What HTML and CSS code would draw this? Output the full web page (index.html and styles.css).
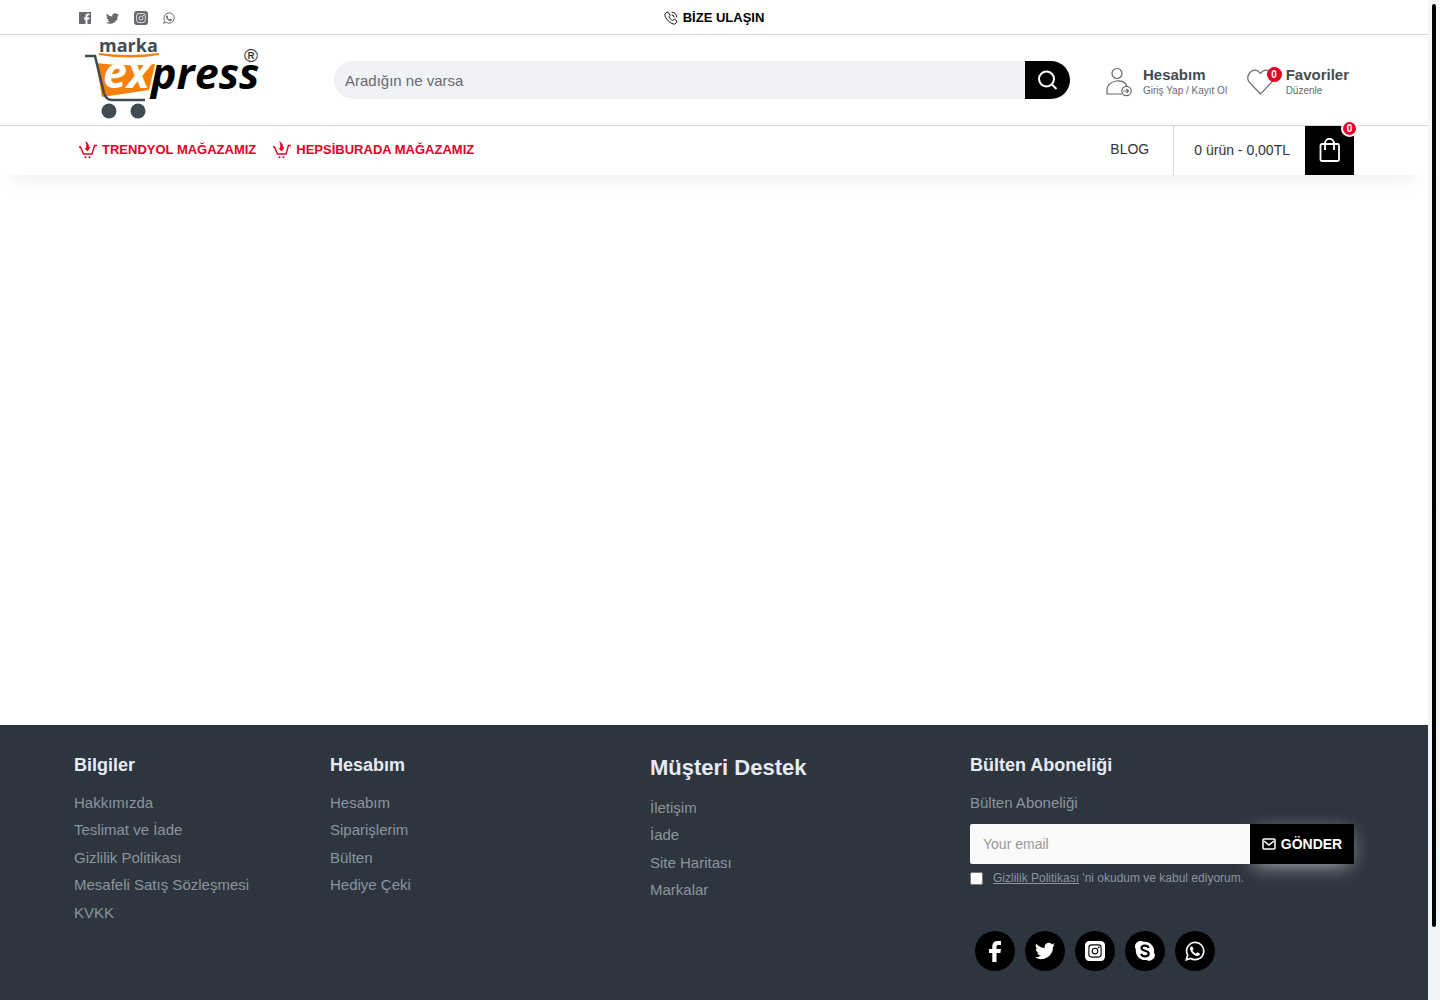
FILE: index.html
```html
<!DOCTYPE html>
<html lang="tr">
<head>
<meta charset="utf-8">
<meta name="viewport" content="width=device-width, initial-scale=1">
<title>Marka Express</title>
<link rel="stylesheet" href="styles.css">
</head>
<body>
<svg class="sprite" aria-hidden="true">
  <symbol id="twitter" viewBox="0 0 24 24"><path d="M23.9 4.6a10 10 0 0 1-2.8.8 5 5 0 0 0 2.1-2.7 10 10 0 0 1-3.1 1.2 4.9 4.9 0 0 0-8.4 4.5A14 14 0 0 1 1.7 3.2a4.9 4.9 0 0 0 1.5 6.5 4.9 4.9 0 0 1-2.2-.6 4.9 4.9 0 0 0 3.9 4.900 5 5 0 0 1-2.200.1 4.900 4.900 0 0 0 4.600 3.400A9.900 9.900 0 0 1 0 19.500 14 14 0 0 0 21.500 7.100a10 10 0 0 0 2.400-2.500z"/></symbol>
  <symbol id="instagram" viewBox="0 0 24 24"><path fill-rule="evenodd" d="M5 0h14a5 5 0 0 1 5 5v14a5 5 0 0 1-5 5H5a5 5 0 0 1-5-5V5a5 5 0 0 1 5-5zm3 4a4 4 0 0 0-4 4v8a4 4 0 0 0 4 4h8a4 4 0 0 0 4-4V8a4 4 0 0 0-4-4zm0 1.300h8A2.700 2.700 0 0 1 18.700 8v8a2.700 2.700 0 0 1-2.700 2.700H8A2.700 2.700 0 0 1 5.300 16V8A2.700 2.700 0 0 1 8 5.300z"/><circle cx="12" cy="12" r="3.400" fill="none" stroke="var(--hole)" stroke-width="1.300"/><circle cx="16.400" cy="7.700" r="1" fill="var(--hole)"/></symbol>
  <symbol id="whatsapp" viewBox="0 0 24 24"><path fill="none" stroke="currentColor" stroke-width="2" d="M1.500 22.500 3.200 17A10.300 10.300 0 1 1 7 20.900z"/><path d="M8 6.300c-.5 0-2 1-2 3 0 3.500 5 8.700 8.800 8.700 1.800 0 3.200-1.400 3.200-2.700 0-.5-2.700-1.900-3.200-1.900s-1.200 1.600-1.700 1.600c-.9 0-4-2.700-4-3.600 0-.5 1.200-1.200 1.200-1.700S9 6.300 8 6.300z"/></symbol>
  <symbol id="cart" viewBox="0 0 18 18"><path fill="none" stroke="currentColor" stroke-width="1.400" d="M0 6h1.500L4.500 13h8.500l2.500-8.500H18"/><path d="M6 0c3 1.500 4 3.500 4 6h1.500L8.500 10.500 5.500 7l1.500.2C7.500 5 7.500 2.500 6 0z"/><circle cx="6.500" cy="16.300" r="1"/><circle cx="10.500" cy="16.300" r="1"/></symbol>
</svg>
<div class="shell">
  <div class="page">
    <header class="header">
      <div class="topbar">
        <div class="container topbar-row">
          <nav class="top-social" aria-label="Sosyal medya">
            <a href="#" aria-label="Facebook"><svg width="12" height="12" viewBox="0 0 12 12"><path d="M0 0h12v12H8.500V7.500h1.700l.3-2h-2V4.300c0-.6.3-1 1-1h1V1.600H9c-1.600 0-2.500 1-2.500 2.500v1.400H5v2h1.500V12H0z"/></svg></a>
            <a href="#" aria-label="Twitter"><svg width="13" height="13"><use href="#twitter"/></svg></a>
            <a href="#" aria-label="Instagram"><svg width="14" height="14"><use href="#instagram"/></svg></a>
            <a href="#" aria-label="WhatsApp"><svg width="12" height="12"><use href="#whatsapp"/></svg></a>
          </nav>
          <a class="contact" href="#"><svg width="14" height="14" viewBox="0 0 24 24" fill="none" stroke="currentColor" stroke-width="1.600"><path d="M5 2 1.500 5.500C1 12 11 23 18.500 22.500L22 19v-2l-4.500-3-3 2.500c-2-1-5-4-6-6.500l2-2.500L7 2zM13 6.500a5 5 0 0 1 4.500 4.500M13 2a10 10 0 0 1 9 9"/></svg>BİZE ULAŞIN</a>
        </div>
      </div>
      <div class="middle">
        <div class="container middle-row">
          <a class="logo" href="#" aria-label="Marka Express">
            <svg width="190" height="90" viewBox="0 0 190 90">
              <path d="M22 28q30 4 59 1l-6 26-47 7z" fill="#f57f0b"/>
              <path d="M25 18q30 4 60 0v2q-30 5-60 0z" fill="#f57f0b"/>
              <path d="M11 21h10l9 37q2 7 8 7h33" fill="none" stroke="#414c52" stroke-width="2.500"/>
              <circle cx="35" cy="76" r="7.500" fill="#414c52"/><circle cx="64" cy="76" r="7.500" fill="#414c52"/>
              <text x="25" y="17" class="logo-small">marka</text>
              <text x="29" y="53" class="logo-ex">ex</text>
              <text x="77" y="54" class="logo-press">press</text>
              <text x="170" y="27" class="logo-reg">®</text>
            </svg>
          </a>
          <form class="search" role="search">
            <input type="search" aria-label="Arama" placeholder="Aradığın ne varsa">
            <button type="button" aria-label="Ara"><svg width="21" height="21" viewBox="0 0 21 21" fill="none" stroke="currentColor" stroke-width="2"><circle cx="9.500" cy="9" r="7.500"/><path d="m15 14.500 4.500 4.500"/></svg></button>
          </form>
          <div class="user-links">
            <a class="user-link account" href="#">
              <svg width="27" height="30" viewBox="0 0 27 30" fill="none" stroke="currentColor" stroke-width="1.200"><circle cx="11" cy="6.500" r="5"/><path d="M16 27H1v-4c0-11 19-12 20-3"/><circle cx="20.500" cy="24" r="4.700"/><path d="M17.500 24h5m-2-2 2 2-2 2"/></svg>
              <span><b>Hesabım</b><small>Giriş Yap / Kayıt Ol</small></span>
            </a>
            <a class="user-link" href="#">
              <span class="heart"><svg width="28" height="27" viewBox="0 0 28 27" fill="none" stroke="currentColor" stroke-width="1.200"><path d="M13.500 26 2 14C-2 7 5 0 11 3l2.500 2.500L16 3c6-3 13 4 9 11z"/></svg><i class="badge">0</i></span>
              <span><b>Favoriler</b><small>Düzenle</small></span>
            </a>
          </div>
        </div>
      </div>
      <div class="container navbar">
        <nav class="stores" aria-label="Mağazalar">
          <a href="#"><svg width="18" height="18"><use href="#cart"/></svg>TRENDYOL MAĞAZAMIZ</a>
          <a href="#"><svg width="18" height="18"><use href="#cart"/></svg>HEPSİBURADA MAĞAZAMIZ</a>
        </nav>
        <a class="blog" href="#">BLOG</a>
        <a class="basket" href="#"><span>0 ürün - 0,00TL</span>
          <span class="bag"><svg width="21" height="25" viewBox="0 0 21 25" fill="none" stroke="currentColor" stroke-width="1.800"><rect x="1.500" y="6" width="18.500" height="17" rx="1.500"/><path d="M6 12V6c0-7 9-7 9 0v6"/></svg><i class="badge ring">0</i></span>
        </a>
      </div>
    </header>
    <main class="content"></main>
    <footer class="footer">
      <div class="container footer-grid">
        <section><h3>Bilgiler</h3>
          <ul><li><a href="#">Hakkımızda</a></li><li><a href="#">Teslimat ve İade</a></li><li><a href="#">Gizlilik Politikası</a></li><li><a href="#">Mesafeli Satış Sözleşmesi</a></li><li><a href="#">KVKK</a></li></ul></section>
        <section><h3>Hesabım</h3>
          <ul><li><a href="#">Hesabım</a></li><li><a href="#">Siparişlerim</a></li><li><a href="#">Bülten</a></li><li><a href="#">Hediye Çeki</a></li></ul></section>
        <section><h3 class="large">Müşteri Destek</h3>
          <ul><li><a href="#">İletişim</a></li><li><a href="#">İade</a></li><li><a href="#">Site Haritası</a></li><li><a href="#">Markalar</a></li></ul></section>
        <section><h3>Bülten Aboneliği</h3>
          <form class="newsletter">
            <label for="email">Bülten Aboneliği</label>
            <div class="email-row">
              <input id="email" type="email" placeholder="Your email">
              <button type="button"><svg width="14" height="12" viewBox="0 0 14 12" fill="none" stroke="currentColor" stroke-width="1.500"><rect x="1" y="1" width="12" height="10" rx="1"/><path d="m2 3 5 4 5-4"/></svg>GÖNDER</button>
            </div>
            <div class="agree"><input id="agree" type="checkbox"><label for="agree"><a href="#">Gizlilik Politikası</a> 'ni okudum ve kabul ediyorum.</label></div>
          </form>
          <nav class="social" aria-label="Bizi takip edin">
            <a href="#" aria-label="Facebook"><svg width="12" height="21" viewBox="0 0 12 21"><path d="M3.300 21V12H0V8h3.300V5.200C3.300 2 5 0 8.500 0H12v4H9.500C8 4 7.500 4.500 7.500 6v2H12l-.6 4H7.500v9z"/></svg></a>
            <a href="#" aria-label="Twitter"><svg width="20" height="20"><use href="#twitter"/></svg></a>
            <a href="#" aria-label="Instagram"><svg width="20" height="20"><use href="#instagram"/></svg></a>
            <a href="#" aria-label="Skype"><svg width="20" height="20" viewBox="0 0 20 20"><path d="M6 0c1 0 2 .3 2.800.8A9.300 9.300 0 0 1 19 11.500 5.500 5.500 0 0 1 11.500 19 9.300 9.300 0 0 1 .9 8.500 5.500 5.500 0 0 1 6 0z"/><path d="M13.500 7C13 3.800 6.500 3.800 6.500 7c0 3.500 7.200 2 7.200 5.500 0 3.800-7 3.500-7.400.3" fill="none" stroke="#000" stroke-width="2.200"/></svg></a>
            <a href="#" aria-label="WhatsApp"><svg width="20" height="20"><use href="#whatsapp"/></svg></a>
          </nav>
        </section>
      </div>
    </footer>
  </div>
  <div class="rail" aria-hidden="true"><div class="thumb"></div></div>
</div>
</body>
</html>
```
FILE: styles.css
```css
* { box-sizing: border-box; }
body {
  margin: 0;
  background: #fff;
  color: #333;
  font: 15px/1.5 "Liberation Sans", Arial, sans-serif;
}
a { color: inherit; text-decoration: none; }
svg { display: block; fill: currentColor; flex: none; }
svg[fill="none"] { fill: none; }
ul, h3 { margin: 0; padding: 0; list-style: none; }
input, button { font: inherit; border: 0; margin: 0; }
.sprite { position: absolute; width: 0; height: 0; }

.shell { display: grid; grid-template-columns: minmax(0, 1fr) 12px; min-height: 100vh; }
.page { display: flex; flex-direction: column; }
.rail { position: sticky; top: 0; height: 100vh; padding: 4px; background: linear-gradient(#f6f7f7, #f2f5f7 70%, #eef4f8); }
.thumb { height: 93%; background: #000; border-radius: 2px; }
.container { width: 100%; max-width: 1280px; margin: 0 auto; }

.header { background: #fff; box-shadow: 0 15px 20px -12px rgba(0, 0, 0, .08); }
.topbar { border-bottom: 1px solid #d6d8da; }
.topbar-row { display: grid; grid-template-columns: 1fr auto 1fr; align-items: center; height: 34px; }
.top-social { --hole: #fff; display: flex; align-items: center; gap: 15px; padding: 2px 0 0 5px; color: #69696e; }
.contact { display: flex; align-items: center; gap: 5px; padding-top: 1px; color: #000; font-size: 13px; font-weight: bold; }

.middle { border-bottom: 1px solid #d6d8da; }
.middle-row { display: flex; align-items: center; height: 90px; }
.logo { width: 260px; flex: none; }
.logo text { font-family: "Open Sans", "Noto Sans", sans-serif; font-weight: 700; }
.logo svg { overflow: visible; }
.logo .logo-small { font-size: 18px; fill: #414c52; }
.logo .logo-ex { font-size: 43px; font-style: italic; fill: #fff; }
.logo .logo-press { font-size: 43px; font-style: italic; fill: #000; }
.logo .logo-reg { font-family: "Liberation Sans", Arial, sans-serif; font-size: 19px; font-weight: 400; fill: #222; }

.search { display: flex; flex: 1; height: 38px; border-radius: 19px; overflow: hidden; }
.search input { flex: 1; min-width: 0; padding: 2px 11px 0; background: #f0f2f5; outline-offset: -2px; }
.search input::placeholder { color: #69696e; opacity: 1; }
.search button { display: grid; place-items: center; width: 45px; padding: 0; background: #000; color: #fff; }

.user-links { display: flex; justify-content: space-between; width: 284px; padding: 3px 5px 0 36px; color: #69696e; }
.user-link { display: flex; align-items: center; gap: 11px; }
.user-link.account { gap: 10px; }
.user-link b, .user-link small { display: block; white-space: nowrap; }
.user-link b { color: #414c52; font-size: 15px; line-height: 18px; }
.user-link small { font-size: 10px; line-height: 14px; }
.heart { position: relative; }
.badge {
  position: absolute; top: -1px; right: -7px;
  width: 15px; height: 15px;
  border-radius: 50%;
  background: #e50027; color: #fff;
  font-size: 10px; font-weight: bold; font-style: normal; line-height: 15px; text-align: center;
}

.navbar { display: flex; align-items: stretch; height: 49px; }
.stores { display: flex; gap: 17px; flex: 1; padding-left: 5px; }
.stores a { display: flex; align-items: center; gap: 5px; color: #e50027; font-size: 13px; font-weight: bold; padding-bottom: 2px; }
.blog { display: flex; align-items: center; padding: 0 24px 2px; border-right: 1px solid #d6d8da; font-size: 14px; }
.basket { display: flex; align-items: center; gap: 15px; padding-left: 20px; font-size: 14px; }
.bag { position: relative; display: grid; place-items: center; width: 49px; height: 49px; background: #000; color: #fff; }
.badge.ring { top: -6px; right: -4px; width: 17px; height: 17px; border: 2px solid #fff; line-height: 13px; }

.content { flex: 1; }

.footer { padding: 26px 0 29px; background: #2d363f; color: #8b949c; }
.footer-grid { display: grid; grid-template-columns: 4fr 5fr 5fr 6fr; }
.footer h3 { margin-bottom: 13px; color: #e6eaf3; font-size: 18px; line-height: 28px; }
.footer h3.large { font-size: 22px; line-height: 33px; }
.footer li { padding-bottom: 5px; }
.newsletter > label { display: block; }
.email-row { display: flex; height: 40px; margin-top: 10px; }
.email-row input { flex: 1; min-width: 0; padding: 0 13px; border-radius: 2px 0 0 2px; background: #fafafa; font-size: 14px; }
.email-row input::placeholder { color: #999; opacity: 1; }
.email-row button {
  display: flex; align-items: center; justify-content: center; gap: 5px;
  width: 104px; padding: 0;
  background: #000; color: #fff; font-size: 14px; font-weight: bold;
  box-shadow: 0 5px 20px -5px rgba(255, 255, 255, .7);
}
.agree { display: flex; align-items: center; gap: 10px; margin-top: 5px; font-size: 12px; line-height: 18px; }
.agree input { width: 13px; height: 13px; }
.agree a { text-decoration: underline; }
.social { --hole: #000; display: flex; gap: 10px; padding-left: 5px; margin-top: 44px; }
.social a { display: grid; place-items: center; width: 40px; height: 40px; border-radius: 50%; background: #000; color: #fff; }
```
